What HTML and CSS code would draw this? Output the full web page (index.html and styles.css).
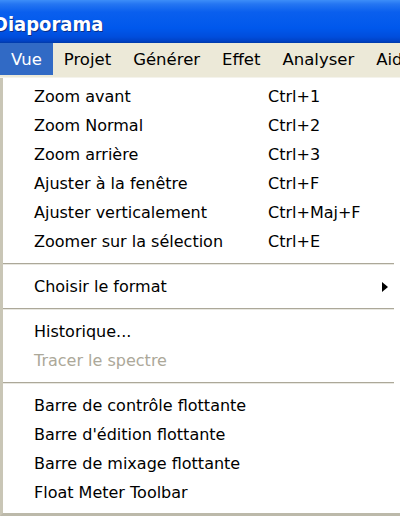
FILE: index.html
```html
<!DOCTYPE html>
<html lang="fr">
<head>
<meta charset="utf-8">
<link rel="stylesheet" href="styles.css">
</head>
<body>
<div class="window">
  <div class="titlebar"><span class="title">Diaporama</span></div>
  <div class="menubar">
    <span class="mb-item active">Vue</span>
    <span class="mb-item">Projet</span>
    <span class="mb-item">Générer</span>
    <span class="mb-item">Effet</span>
    <span class="mb-item">Analyser</span>
    <span class="mb-item">Aide</span>
  </div>
  <div class="menu">
    <div class="row"><span class="label">Zoom avant</span><span class="key">Ctrl+1</span></div>
    <div class="row"><span class="label">Zoom Normal</span><span class="key">Ctrl+2</span></div>
    <div class="row"><span class="label">Zoom arrière</span><span class="key">Ctrl+3</span></div>
    <div class="row"><span class="label">Ajuster à la fenêtre</span><span class="key">Ctrl+F</span></div>
    <div class="row"><span class="label">Ajuster verticalement</span><span class="key">Ctrl+Maj+F</span></div>
    <div class="row"><span class="label">Zoomer sur la sélection</span><span class="key">Ctrl+E</span></div>
    <div class="sep"></div>
    <div class="row"><span class="label">Choisir le format</span><span class="key"></span><span class="arrow"></span></div>
    <div class="sep"></div>
    <div class="row"><span class="label">Historique...</span></div>
    <div class="row disabled"><span class="label">Tracer le spectre</span></div>
    <div class="sep"></div>
    <div class="row"><span class="label">Barre de contrôle flottante</span></div>
    <div class="row"><span class="label">Barre d'édition flottante</span></div>
    <div class="row"><span class="label">Barre de mixage flottante</span></div>
    <div class="row"><span class="label">Float Meter Toolbar</span></div>
  </div>
</div>
</body>
</html>
```

FILE: styles.css
```css
html, body {
  margin: 0;
  padding: 0;
  background: #ffffff;
}
body {
  width: 400px;
  height: 516px;
  overflow: hidden;
  font-family: "DejaVu Sans", "Liberation Sans", sans-serif;
  font-size: 16px;
  color: #000;
}
.window {
  display: flex;
  flex-direction: column;
  width: 400px;
  height: 516px;
  overflow: hidden;
}
.titlebar {
  height: 43px;
  flex: none;
  background: linear-gradient(#3d8ef8 0px, #2576f2 4px, #0a5fee 12px, #0058ec 28px, #004ddc 37px, #0042c6 41px, #003aa8 43px);
  display: flex;
  align-items: center;
  overflow: hidden;
}
.title {
  margin-left: -7px;
  margin-top: 5px;
  color: #fff;
  font-family: "DejaVu Sans Condensed", "DejaVu Sans", sans-serif;
  font-weight: bold;
  font-size: 20px;
  text-shadow: 1px 1px 0 #0a2f8a;
}
.menubar {
  height: 35px;
  flex: none;
  background: #ece9d8;
  display: flex;
  align-items: stretch;
  border-bottom: 1px solid #f4f3ec;
  box-sizing: border-box;
  white-space: nowrap;
  overflow: hidden;
}
.mb-item {
  display: flex;
  align-items: center;
  padding: 0 11px;
  margin-bottom: 2px;
  font-size: 16.5px;
}
.mb-item.active {
  background: #316ac5;
  color: #fff;
}
.menu {
  flex: 1;
  background: #fff;
  border-left: 3px solid #c9c6b6;
  border-bottom: 3px solid #bcb9aa;
  padding: 4px 0 0 0;
  display: flex;
  flex-direction: column;
  box-sizing: border-box;
}
.row {
  height: 29px;
  flex: none;
  display: grid;
  grid-template-columns: 234px 1fr 18px;
  align-items: center;
  padding-left: 31px;
  white-space: nowrap;
}
.row.disabled {
  color: #aca899;
}
.arrow {
  width: 0;
  height: 0;
  border-top: 5px solid transparent;
  border-bottom: 5px solid transparent;
  border-left: 6px solid #000;
}
.sep {
  height: 16px;
  flex: none;
  display: flex;
  align-items: center;
  padding-right: 6px;
}
.sep::before {
  content: "";
  display: block;
  width: 100%;
  height: 1px;
  border-top: 1px solid #aca899;
  background: #e8e7e0;
}
```
